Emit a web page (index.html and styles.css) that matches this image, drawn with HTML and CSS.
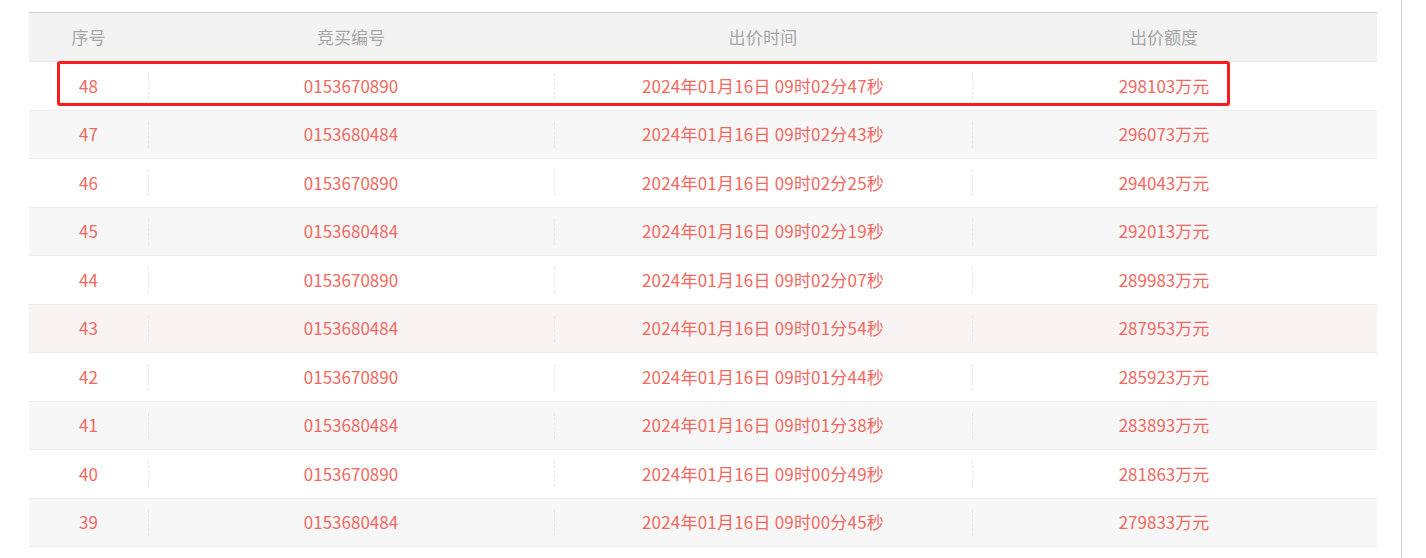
FILE: index.html
```html
<!DOCTYPE html>
<html lang="zh-CN">
<head>
<meta charset="utf-8">
<link rel="stylesheet" href="styles.css">
</head>
<body>
<div class="page">
  <div class="table">
    <div class="row head">
      <div class="cell c1">序号</div>
      <div class="cell c2">竞买编号</div>
      <div class="cell c3">出价时间</div>
      <div class="cell c4">出价额度</div>
    </div>
    <div class="row">
      <div class="cell c1">48</div>
      <div class="cell c2">0153670890</div>
      <div class="cell c3">2024年01月16日 09时02分47秒</div>
      <div class="cell c4">298103万元</div>
    </div>
    <div class="row alt">
      <div class="cell c1">47</div>
      <div class="cell c2">0153680484</div>
      <div class="cell c3">2024年01月16日 09时02分43秒</div>
      <div class="cell c4">296073万元</div>
    </div>
    <div class="row">
      <div class="cell c1">46</div>
      <div class="cell c2">0153670890</div>
      <div class="cell c3">2024年01月16日 09时02分25秒</div>
      <div class="cell c4">294043万元</div>
    </div>
    <div class="row alt">
      <div class="cell c1">45</div>
      <div class="cell c2">0153680484</div>
      <div class="cell c3">2024年01月16日 09时02分19秒</div>
      <div class="cell c4">292013万元</div>
    </div>
    <div class="row">
      <div class="cell c1">44</div>
      <div class="cell c2">0153670890</div>
      <div class="cell c3">2024年01月16日 09时02分07秒</div>
      <div class="cell c4">289983万元</div>
    </div>
    <div class="row hover">
      <div class="cell c1">43</div>
      <div class="cell c2">0153680484</div>
      <div class="cell c3">2024年01月16日 09时01分54秒</div>
      <div class="cell c4">287953万元</div>
    </div>
    <div class="row">
      <div class="cell c1">42</div>
      <div class="cell c2">0153670890</div>
      <div class="cell c3">2024年01月16日 09时01分44秒</div>
      <div class="cell c4">285923万元</div>
    </div>
    <div class="row alt">
      <div class="cell c1">41</div>
      <div class="cell c2">0153680484</div>
      <div class="cell c3">2024年01月16日 09时01分38秒</div>
      <div class="cell c4">283893万元</div>
    </div>
    <div class="row">
      <div class="cell c1">40</div>
      <div class="cell c2">0153670890</div>
      <div class="cell c3">2024年01月16日 09时00分49秒</div>
      <div class="cell c4">281863万元</div>
    </div>
    <div class="row alt">
      <div class="cell c1">39</div>
      <div class="cell c2">0153680484</div>
      <div class="cell c3">2024年01月16日 09时00分45秒</div>
      <div class="cell c4">279833万元</div>
    </div>
  </div>
  <div class="mark"></div>
</div>
</body>
</html>
```
FILE: styles.css
```css
* { box-sizing: border-box; }
html, body { margin: 0; padding: 0; background: #fff; }
body {
  font-family: "Noto Sans CJK SC", "Noto Sans", sans-serif;
  font-size: 17px;
  width: 1426px;
  height: 558px;
  overflow: hidden;
}
.page {
  position: relative;
  width: 1402px;
  height: 558px;
  border-right: 1px solid #cfcfcf;
  padding: 12px 0 0 29px;
}
.table {
  width: 1348px;
  border-top: 1px solid #cdcdcd;
}
.row {
  display: flex;
  height: 48.5px;
  border-bottom: 1px solid #ececec;
  color: #f2685f;
  background: #fff;
}
.row.alt { background: #f7f7f7; }
.row.hover { background: #f9f4f4; }
.row.head {
  height: 49px;
  background: #f3f3f3;
  color: #a6a6a6;
  border-bottom: 1px solid #e6e6e6;
}
.cell {
  position: relative;
  display: flex;
  align-items: center;
  justify-content: center;
  white-space: nowrap;
  padding-bottom: 1px;
}
.c1 { width: 119px; }
.c2 { width: 406px; }
.c3 { width: 418px; letter-spacing: 0.2px; }
.c4 { width: 405px; padding-right: 21px; }
.row:not(.head) .cell:not(.c1)::before {
  content: "";
  position: absolute;
  left: 0;
  top: 11px;
  height: 26px;
  border-left: 1px dashed #e8e8e8;
}
.mark {
  position: absolute;
  left: 57px;
  top: 61px;
  width: 1173px;
  height: 45px;
  border: 3px solid #fb1c1c;
  border-radius: 3px;
}
```
